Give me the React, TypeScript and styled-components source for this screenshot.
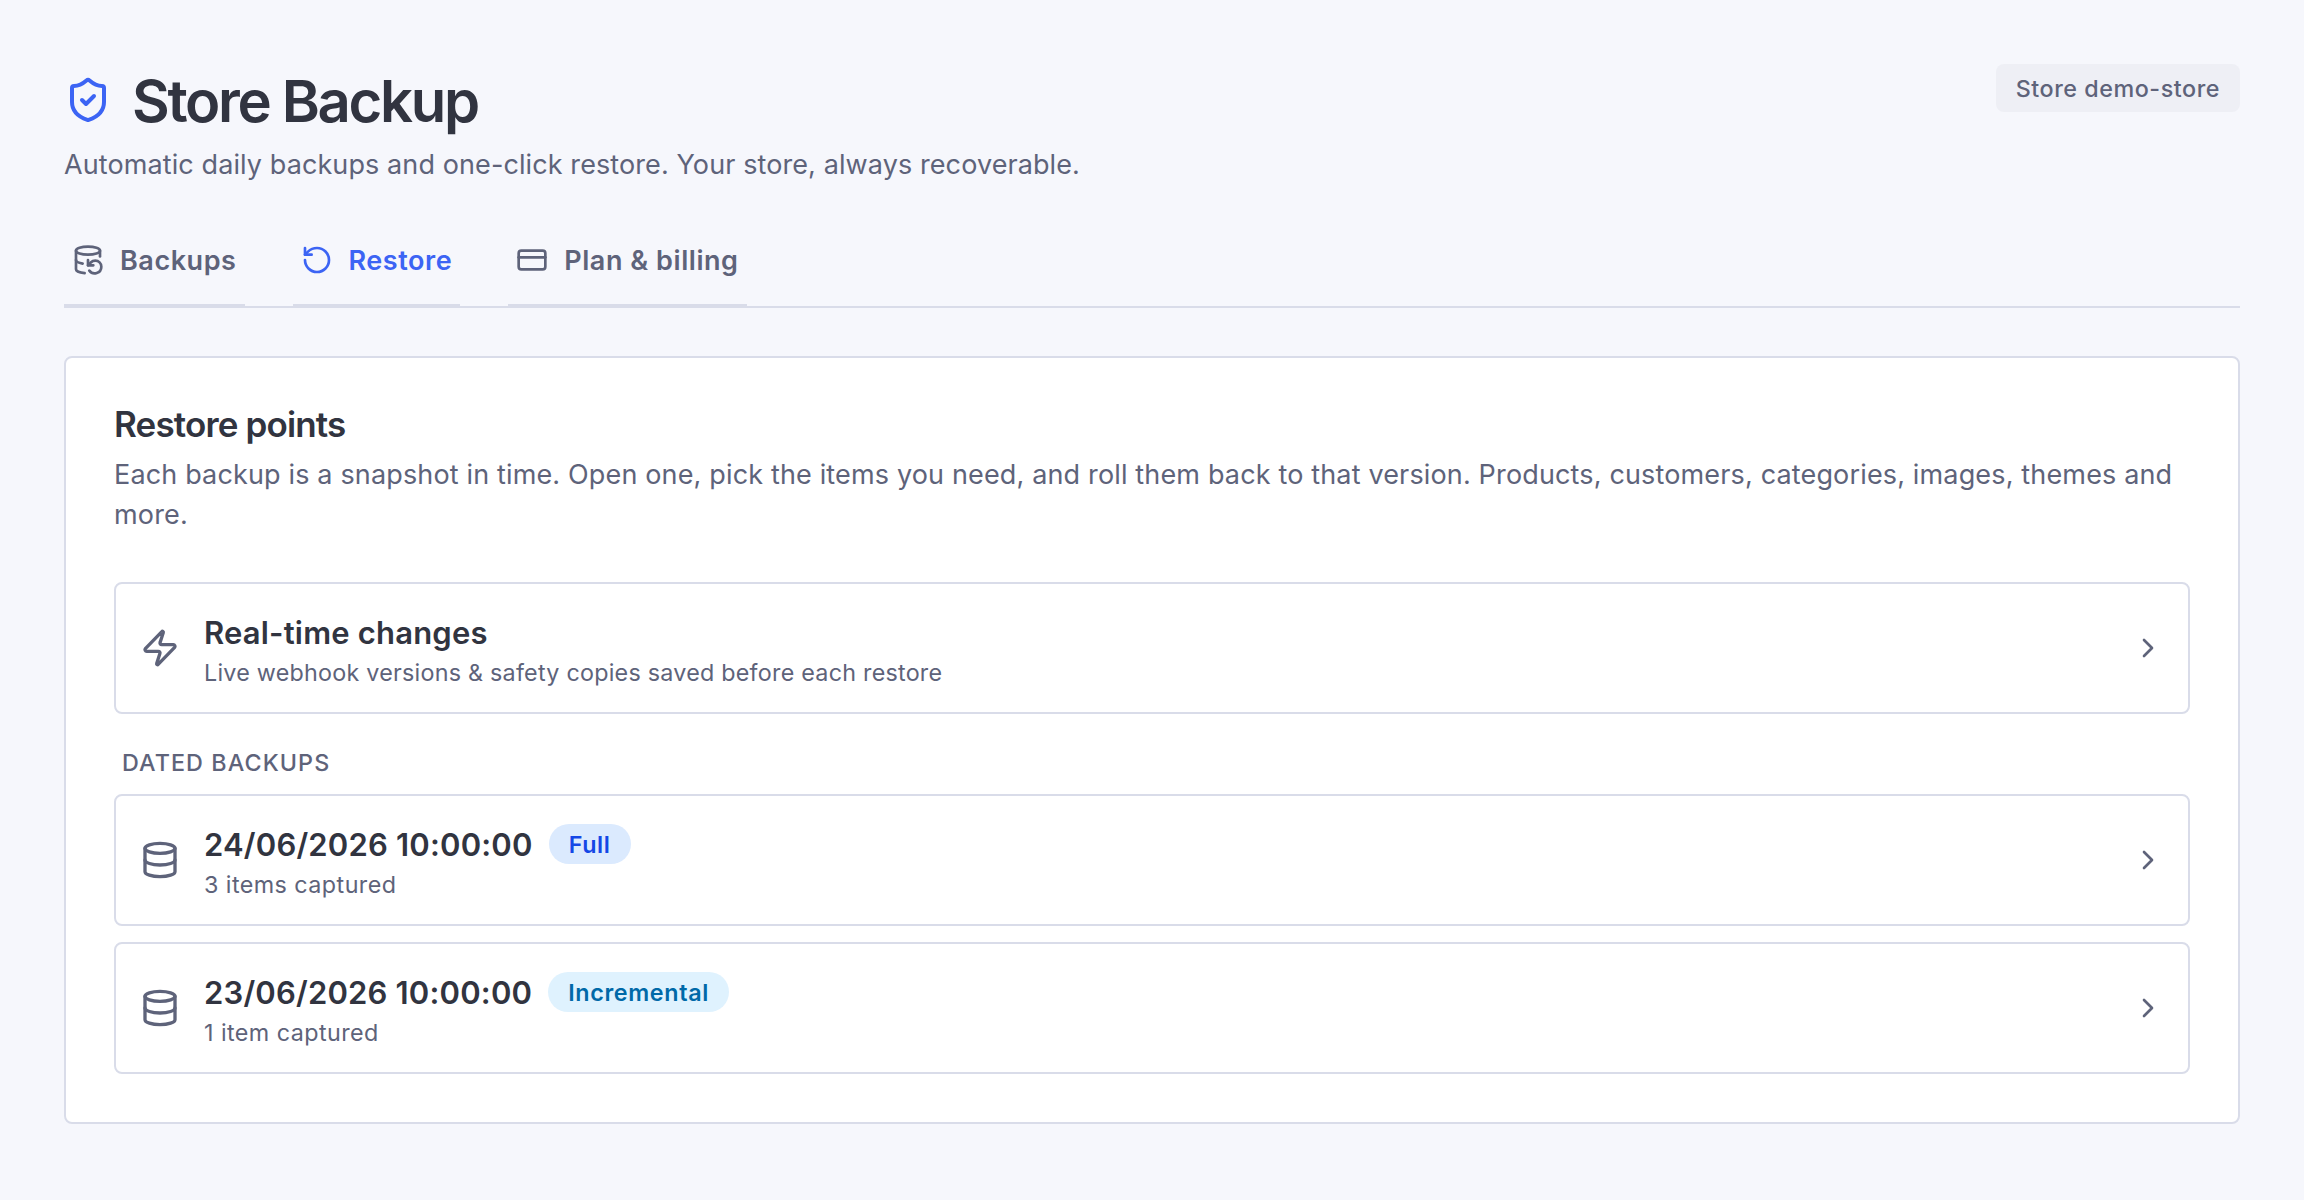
import React from "react";
import styled, { createGlobalStyle } from "styled-components";
import {
  ChevronRight,
  CreditCard,
  Database,
  DatabaseBackup,
  RotateCcw,
  ShieldCheck,
  Zap,
} from "lucide-react";

const color = {
  page: "#f6f7fc",
  surface: "#ffffff",
  border: "#d9dce9",
  text: "#313440",
  muted: "#5e637a",
  primary: "#3c64f4",
};

const GlobalStyle = createGlobalStyle`
  *, *::before, *::after { box-sizing: border-box; }
  body {
    margin: 0;
    background: ${color.page};
    color: ${color.text};
    font-family: Inter, "Liberation Sans", sans-serif;
    -webkit-font-smoothing: antialiased;
  }
  h1, h2, h3, p { margin: 0; }
  button { font: inherit; background: none; cursor: pointer; }
  svg { display: block; flex: none; }
`;

const Page = styled.main`
  min-height: 1200px;
  padding: 64px;
`;

const Header = styled.header`
  display: flex;
  justify-content: space-between;
  align-items: flex-start;
`;

const TitleRow = styled.div`
  display: flex;
  align-items: center;
  gap: 20px;
  height: 72px;
  color: ${color.primary};
`;

const Title = styled.h1`
  padding-top: 2px;
  color: ${color.text};
  font-size: 58px;
  line-height: 72px;
  font-weight: 600;
  letter-spacing: -0.04em;
`;

const Lead = styled.p`
  margin-top: 9px;
  color: ${color.muted};
  font-size: 27px;
  line-height: 40px;
  letter-spacing: 0.0036em;
`;

const StoreTag = styled.span`
  padding: 9px 20px 7px;
  border-radius: 8px;
  background: #eeeff5;
  color: ${color.muted};
  font-size: 23.3px;
  line-height: 32px;
  font-weight: 500;
  letter-spacing: 0.0235em;
`;

const Tabs = styled.nav`
  display: flex;
  gap: 48px;
  height: 96px;
  margin-top: 27px;
  border-bottom: 2px solid ${color.border};
`;

const Tab = styled.button<{ $active?: boolean }>`
  display: flex;
  align-items: center;
  gap: 16px;
  padding: 4px 8px 0;
  border: 0;
  border-bottom: 2px solid ${color.border};
  color: ${(p) => (p.$active ? color.primary : color.muted)};
`;

const TabName = styled.span`
  padding-top: 2px;
  font-size: 27px;
  line-height: 40px;
  font-weight: 600;
  letter-spacing: 0.0205em;
`;

const Card = styled.section`
  margin-top: 48px;
  padding: 48px;
  border: 2px solid ${color.border};
  border-radius: 8px;
  background: ${color.surface};
`;

const CardTitle = styled.h2`
  font-size: 35px;
  line-height: 36px;
  font-weight: 600;
  letter-spacing: -0.0243em;
`;

const CardText = styled.p`
  margin: 13px 0 47px;
  color: ${color.muted};
  font-size: 27px;
  line-height: 40px;
  letter-spacing: 0.0056em;
`;

const Snapshots = styled.div`
  display: flex;
  flex-direction: column;
  gap: 16px;
`;

const Label = styled.h3`
  padding: 33px 8px 15px;
  color: ${color.muted};
  font-size: 23.3px;
  line-height: 32px;
  font-weight: 500;
  letter-spacing: 0.047em;
  text-transform: uppercase;
`;

const Row = styled.button`
  display: flex;
  align-items: center;
  gap: 24px;
  width: 100%;
  height: 132px;
  padding: 0 24px;
  border: 2px solid ${color.border};
  border-radius: 8px;
  color: ${color.muted};
  text-align: left;
`;

const RowBody = styled.div`
  flex: 1;
  padding-top: 5px;
`;

const RowHead = styled.div`
  display: flex;
  align-items: center;
  gap: 16px;
  height: 40px;
`;

const RowTitle = styled.span`
  padding-top: 2px;
  color: ${color.text};
  font-size: 31px;
  line-height: 40px;
  font-weight: 600;
  letter-spacing: 0.006em;
`;

const RowMeta = styled.p<{ $tracking: number }>`
  margin-top: 5px;
  font-size: 23.3px;
  line-height: 32px;
  letter-spacing: ${(p) => p.$tracking}em;
`;

const Badge = styled.span<{ $tone: "blue" | "sky" }>`
  padding: 5px 20px 3px;
  border-radius: 20px;
  background: ${(p) => (p.$tone === "blue" ? "#dbeafe" : "#dff2fe")};
  color: ${(p) => (p.$tone === "blue" ? "#1447e6" : "#0069a8")};
  font-size: 23.3px;
  line-height: 32px;
  font-weight: 600;
  letter-spacing: 0.028em;
`;

const tabs = [
  { name: "Backups", Icon: DatabaseBackup },
  { name: "Restore", Icon: RotateCcw, active: true },
  { name: "Plan & billing", Icon: CreditCard },
];

const backups = [
  { date: "24/06/2026 10:00:00", kind: "Full", tone: "blue" as const, meta: "3 items captured" },
  { date: "23/06/2026 10:00:00", kind: "Incremental", tone: "sky" as const, meta: "1 item captured" },
];

export default function App() {
  return (
    <Page>
      <GlobalStyle />
      <Header>
        <div>
          <TitleRow>
            <ShieldCheck size={48} />
            <Title>Store Backup</Title>
          </TitleRow>
          <Lead>Automatic daily backups and one-click restore. Your store, always recoverable.</Lead>
        </div>
        <StoreTag>Store demo-store</StoreTag>
      </Header>

      <Tabs>
        {tabs.map(({ name, Icon, active }) => (
          <Tab key={name} $active={active}>
            <Icon size={32} />
            <TabName>{name}</TabName>
          </Tab>
        ))}
      </Tabs>

      <Card>
        <CardTitle>Restore points</CardTitle>
        <CardText>
          Each backup is a snapshot in time. Open one, pick the items you need, and roll them back to
          that version. Products, customers, categories, images, themes and more.
        </CardText>

        <Row>
          <Zap size={40} />
          <RowBody>
            <RowHead>
              <RowTitle>Real-time changes</RowTitle>
            </RowHead>
            <RowMeta $tracking={0.0105}>
              Live webhook versions &amp; safety copies saved before each restore
            </RowMeta>
          </RowBody>
          <ChevronRight size={32} />
        </Row>

        <Label>Dated backups</Label>
        <Snapshots>
          {backups.map((b) => (
            <Row key={b.date}>
              <Database size={40} />
              <RowBody>
                <RowHead>
                  <RowTitle>{b.date}</RowTitle>
                  <Badge $tone={b.tone}>{b.kind}</Badge>
                </RowHead>
                <RowMeta $tracking={0.019}>{b.meta}</RowMeta>
              </RowBody>
              <ChevronRight size={32} />
            </Row>
          ))}
        </Snapshots>
      </Card>
    </Page>
  );
}
